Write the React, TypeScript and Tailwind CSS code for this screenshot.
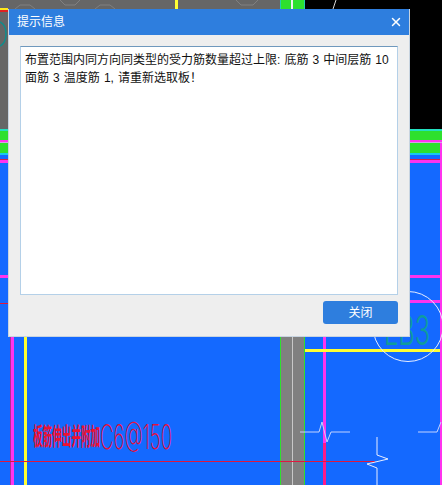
import { X } from 'lucide-react'

// CAD drawing behind the dialog
function CadCanvas() {
  return (
    <svg className="absolute inset-0" width="442" height="485" viewBox="0 0 442 485" shapeRendering="crispEdges">
      <rect width="442" height="485" fill="#1469ff" />
      <rect width="305" height="129" fill="#666666" />
      <rect x="305" width="137" height="129" fill="#000000" />
      {/* top edge */}
      <rect y="8" width="8" height="2" fill="#ffe81a" />
      <rect y="10" width="8" height="2" fill="#e02020" />
      <rect x="280" width="24" height="9" fill="#2ee02e" />
      <rect x="280" width="1" height="9" fill="#22d0b0" />
      <rect x="304" width="1" height="9" fill="#22d0b0" />
      <rect x="291" width="2" height="9" fill="#f0f0f0" />
      <rect x="175" width="3" height="9" fill="#ffff33" />
      {/* horizontal bands */}
      <rect y="129" width="442" height="2" fill="#22e0c0" />
      <rect y="131" width="442" height="9" fill="#2ee02e" />
      <rect y="140" width="442" height="2" fill="#ff33ee" />
      <rect y="142" width="442" height="1" fill="#d8a0e8" />
      <rect y="143" width="442" height="10" fill="#2ee02e" />
      <rect y="153" width="442" height="2" fill="#18c8f0" />
      <rect y="159" width="442" height="1" fill="#d0204a" />
      <rect y="160" width="442" height="3" fill="#ff33ee" />
      <rect y="275" width="442" height="3" fill="#ff33ee" />
      {/* verticals under the dialog */}
      <rect x="10" y="337" width="1" height="148" fill="#a83098" />
      <rect x="11" y="337" width="3" height="148" fill="#ff33ee" />
      <rect x="24" y="337" width="3" height="148" fill="#ffff33" />
      <rect x="280" y="337" width="24" height="148" fill="#808080" />
      <rect x="280" y="337" width="1" height="148" fill="#2ee02e" />
      <rect x="304" y="337" width="1" height="148" fill="#2ee02e" />
      <rect x="292" y="337" width="1" height="148" fill="#c8c8c8" />
      <rect x="323" y="337" width="3" height="106" fill="#ff33ee" />
      <rect x="323" y="443" width="3" height="42" fill="#ff1a88" />
      <rect x="440" y="143" width="2" height="342" fill="#ff33ee" />
      <rect x="305" y="349" width="135" height="3" fill="#ffff33" />
      <rect x="410" y="300" width="30" height="3" fill="#ff33ee" />
      <rect y="303" width="8" height="1" fill="#e0183c" />
      <rect y="461" width="375" height="1" fill="#e0183c" />
      <g shapeRendering="auto" fill="none">
        <path d="M15 9 L20 5 H30 L35 9 M60 0 L65 5 H75 L80 0 M95 9 L100 5 H110 L115 9 M236 0 L241 5 H253 L258 0" stroke="#808080" strokeWidth="1" />
        <path d="M336 0 L333 9" stroke="#d8d8d8" strokeWidth="1" />
        <path d="M0 22 C8 26 8 42 0 46" stroke="#108c8c" strokeWidth="1.5" />
        <circle cx="408" cy="326.5" r="35" stroke="#e8eeff" strokeWidth="1" />
        <path d="M300 432 H319 L322 422 L327 442 L331 432 H350" stroke="#c4d4ff" strokeWidth="1" />
        <path d="M418 432 H437 L441 422" stroke="#c4d4ff" strokeWidth="1" />
        <path d="M377 437 V455 L388 459 L367 464 L377 468 V485" stroke="#e8eeff" strokeWidth="1" />
      </g>
    </svg>
  )
}

export default function App() {
  return (
    <div className="relative w-[442px] h-[485px] overflow-hidden font-['Liberation_Sans','Noto_Sans_CJK_SC',sans-serif]">
      <CadCanvas />
      {/* Texts that belong to the drawing */}
      <span className="absolute left-[384px] top-[310px] text-[41px] leading-[40px] font-light font-['Inter',sans-serif] whitespace-nowrap scale-x-[0.62] origin-left text-[#0f9c9c]">LB3</span>
      <span className="absolute left-[33px] top-[425px] text-[24px] leading-[24px] font-bold whitespace-nowrap scale-x-[0.4] origin-left text-[#f01030]">板筋伸出并附加</span>
      <span className="absolute left-[100px] top-[417px] text-[34px] leading-[40px] font-extralight font-['Inter',sans-serif] whitespace-nowrap scale-x-[0.55] origin-left text-[#e8103c]">C6@150</span>

      <div className="absolute left-[8px] top-[9px] w-[402px] h-[328px] flex flex-col bg-[#eeeeee] border-r border-b border-l border-[#c8d4e0]">
        <div className="h-[27px] flex items-center justify-between bg-[#2e7ede] pl-[8px] pr-[6px] text-white">
          <span className="text-[12px]">提示信息</span>
          <X size={14} strokeWidth={2.5} />
        </div>
        <div className="flex-1 flex flex-col px-[11px] pt-[11px] pb-[12px]">
          <div className="h-[249px] bg-white border border-[#b4d0e8] border-t-[#6f98bd] px-[4px] py-[4px] text-[12px] leading-[18px] [word-spacing:0.75px] text-[#111111]">
            布置范围内同方向同类型的受力筋数量超过上限: 底筋 3 中间层筋 10 面筋 3 温度筋 1, 请重新选取板！
          </div>
          <div className="mt-[6px] flex justify-end">
            <button className="w-[75px] h-[23px] pt-[1px] rounded-[3px] bg-[#2e7ede] text-white text-[12px]">关闭</button>
          </div>
        </div>
      </div>
    </div>
  )
}
